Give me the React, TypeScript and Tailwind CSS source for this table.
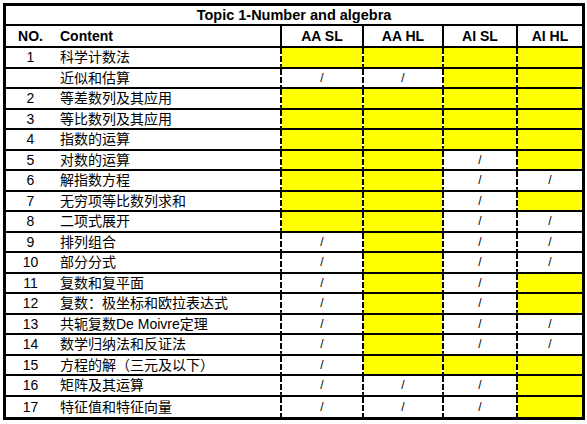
type Mark = 'y' | 's';

const rows: [string, string, Mark[]][] = [
  ['1', '科学计数法', ['y', 'y', 'y', 'y']],
  ['', '近似和估算', ['s', 's', 'y', 'y']],
  ['2', '等差数列及其应用', ['y', 'y', 'y', 'y']],
  ['3', '等比数列及其应用', ['y', 'y', 'y', 'y']],
  ['4', '指数的运算', ['y', 'y', 'y', 'y']],
  ['5', '对数的运算', ['y', 'y', 's', 'y']],
  ['6', '解指数方程', ['y', 'y', 's', 's']],
  ['7', '无穷项等比数列求和', ['y', 'y', 's', 'y']],
  ['8', '二项式展开', ['y', 'y', 's', 's']],
  ['9', '排列组合', ['s', 'y', 's', 's']],
  ['10', '部分分式', ['s', 'y', 's', 's']],
  ['11', '复数和复平面', ['s', 'y', 's', 'y']],
  ['12', '复数：极坐标和欧拉表达式', ['s', 'y', 's', 'y']],
  ['13', '共轭复数De Moivre定理', ['s', 'y', 's', 's']],
  ['14', '数学归纳法和反证法', ['s', 'y', 's', 's']],
  ['15', '方程的解（三元及以下）', ['s', 'y', 'y', 'y']],
  ['16', '矩阵及其运算', ['s', 's', 's', 'y']],
  ['17', '特征值和特征向量', ['s', 's', 's', 'y']],
];

const levels = ['AA SL', 'AA HL', 'AI SL', 'AI HL'];

// dashed divider on the left edge, drawn as a background strip
const Cell = ({ mark, last }: { mark: Mark; last: boolean }) => (
  <td
    className={`${last ? '' : 'border-b-2'} border-black ${
      mark === 'y' ? 'bg-[#ffff00]' : 'bg-white'
    } bg-[repeating-linear-gradient(to_bottom,#000_0px,#000_6px,#fff_6px,#fff_8px)] bg-[length:2px_100%] bg-left bg-no-repeat p-0 pl-[2px] text-center text-[12px] leading-none`}
  >
    {mark === 's' ? '/' : null}
  </td>
);

export default function App() {
  return (
    <div className="w-[587px] h-[424px] bg-white pt-[3px] pl-[3px] font-['Liberation_Sans','Noto_Sans_CJK_SC',sans-serif] text-black">
      <table className="table-fixed border-separate border-spacing-0 w-[582px] border-[3px] border-black">
        <colgroup>
          <col className="w-[49px]" />
          <col className="w-[225px]" />
          <col className="w-[82px]" />
          <col className="w-[80px]" />
          <col className="w-[74px]" />
          <col className="w-[66px]" />
        </colgroup>
        <tbody>
          <tr className="h-[20px]">
            <td colSpan={6} className="border-b-2 border-black p-0 text-center text-[14.5px] font-bold leading-none">
              Topic 1-Number and algebra
            </td>
          </tr>
          <tr className="h-[22px]">
            <td className="border-b-2 border-black p-0 text-center text-[14px] font-bold leading-none">NO.</td>
            <td className="border-b-2 border-black p-0 pl-[5px] text-[14px] font-bold leading-none">Content</td>
            {levels.map((l) => (
              <td key={l} className="border-b-2 border-l-2 border-black p-0 text-center text-[14px] font-bold leading-none">
                {l}
              </td>
            ))}
          </tr>
          {rows.map(([no, content, marks], i) => {
            const last = i === rows.length - 1;
            return (
              <tr key={i} className="h-[20.5px]">
                <td className={`${last ? '' : 'border-b-2'} border-black p-0 text-center text-[14px] leading-none`}>{no}</td>
                <td className={`${last ? '' : 'border-b-2'} border-black p-0 pl-[5px] text-[14px] leading-none whitespace-nowrap`}>
                  {content}
                </td>
                {marks.map((m, j) => (
                  <Cell key={j} mark={m} last={last} />
                ))}
              </tr>
            );
          })}
        </tbody>
      </table>
    </div>
  );
}
